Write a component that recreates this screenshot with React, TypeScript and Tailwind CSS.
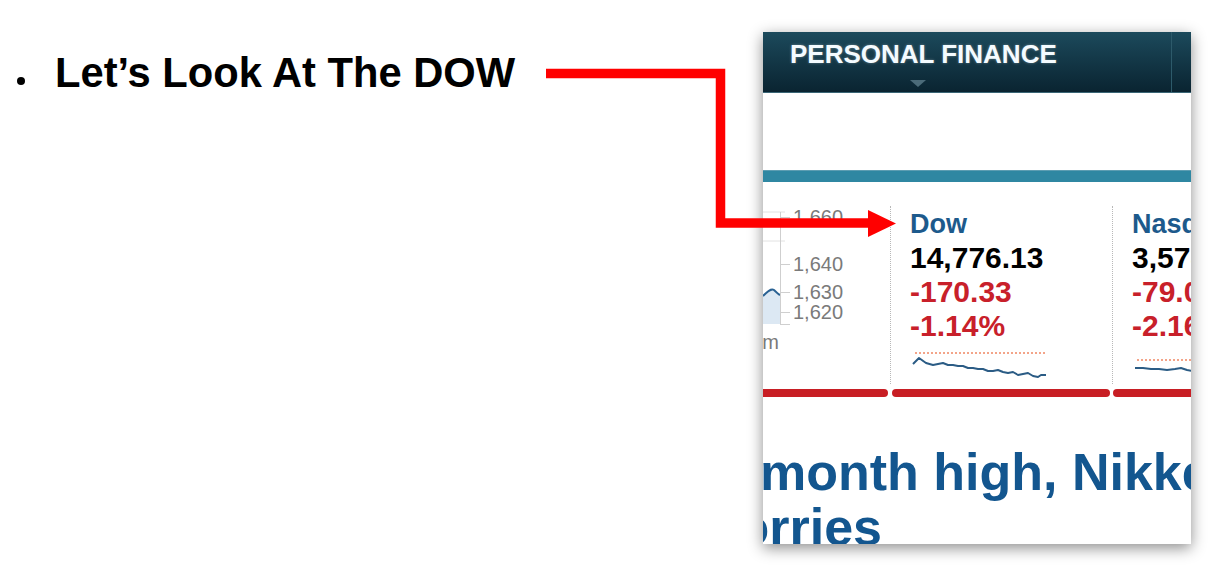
import React from "react";

const font = "font-['Liberation_Sans',Arial,sans-serif]";

// rough trace of the intraday sparkline under the Dow quote
const dowSpark = [
  [2, 8], [8, 2], [15, 7], [22, 9], [27, 8], [32, 7], [37, 9], [42, 9], [47, 10],
  [52, 10], [57, 12], [62, 12], [67, 13], [72, 13], [77, 15], [82, 15], [87, 14],
  [92, 16], [97, 17], [102, 16], [107, 19], [112, 18], [117, 17], [122, 20],
  [127, 21], [130, 19], [135, 19],
];

const nasdaqSpark = [
  [2, 5], [10, 5], [18, 6], [26, 6], [34, 7], [42, 6], [48, 5], [54, 7], [60, 8],
];

function pts(list: number[][]) {
  return list.map((p) => p.join(",")).join(" ");
}

function ChartAxis() {
  return (
    <svg width="127" height="207" viewBox="0 0 127 207">
      <line x1="0" y1="30" x2="22" y2="30" stroke="#e2e2e2" strokeWidth="1" />
      <line x1="0" y1="59" x2="22" y2="59" stroke="#e2e2e2" strokeWidth="1" />
      <path d="M0 114 C4 110 8 106 11 108 C13 110 15 112 17 113 L17 142 L0 142 Z" fill="#dce8f3" />
      <path d="M0 114 C4 110 8 106 11 108 C13 110 15 112 17 113" fill="none" stroke="#2a6293" strokeWidth="2" />
      <line x1="17.5" y1="30" x2="17.5" y2="142" stroke="#cfcfcf" strokeWidth="1" />
      <line x1="17" y1="35.5" x2="27" y2="35.5" stroke="#cfcfcf" strokeWidth="1" />
      <line x1="17" y1="82.5" x2="27" y2="82.5" stroke="#cfcfcf" strokeWidth="1" />
      <line x1="17" y1="110.5" x2="27" y2="110.5" stroke="#cfcfcf" strokeWidth="1" />
      <line x1="17" y1="130.5" x2="27" y2="130.5" stroke="#cfcfcf" strokeWidth="1" />
      <line x1="17" y1="142.5" x2="27" y2="142.5" stroke="#cfcfcf" strokeWidth="1" />
      <g fill="#7a7a7a" fontFamily="Liberation Sans, Arial, sans-serif" fontSize="20">
        <text x="30" y="42">1,660</text>
        <text x="30" y="89">1,640</text>
        <text x="30" y="117">1,630</text>
        <text x="30" y="137">1,620</text>
        <text x="16" y="167" textAnchor="end">4pm</text>
      </g>
    </svg>
  );
}

function Quote({
  name,
  last,
  change,
  pct,
  spark,
  dotsTop,
}: {
  name: string;
  last: string;
  change: string;
  pct: string;
  spark: number[][];
  dotsTop: string;
}) {
  return (
    <div className="flex flex-col whitespace-nowrap pt-[25px] pl-[19px] font-bold">
      <div className="text-[27px] leading-[34px] text-[#1d5a8c]">{name}</div>
      <div className="text-[30px] leading-[34px] text-black">{last}</div>
      <div className="text-[30px] leading-[34px] text-[#c8202a]">{change}</div>
      <div className="text-[30px] leading-[34px] text-[#c8202a]">{pct}</div>
      <div className={`${dotsTop} ml-[5px] w-[130px] border-t-2 border-dotted border-[#f3a489]`} />
      <svg className="mt-[2px] ml-[1px]" width="138" height="24" viewBox="0 0 138 24">
        <polyline points={pts(spark)} fill="none" stroke="#2b5c85" strokeWidth="2" strokeLinejoin="round" />
      </svg>
    </div>
  );
}

function Divider() {
  return <div className="mt-[24px] h-[178px] w-0 border-l border-dotted border-[#b8b8b8]" />;
}

function Screenshot() {
  return (
    <div className={`mt-[32px] flex h-[512px] w-[428px] flex-col overflow-hidden bg-white shadow-[0_4px_14px_rgba(0,0,0,0.45)] ${font}`}>
      {/* nav header */}
      <div className="flex h-[61px] shrink-0 border-b border-[#3a6676] bg-gradient-to-b from-[#1c4a5c] to-[#0a2431]">
        <div className="flex w-[408px] flex-col pl-[27px] pt-[9px]">
          <div className="text-[26px] font-bold leading-none text-[#f4fbff] [text-shadow:0_0_3px_rgba(255,255,255,0.35)]">
            PERSONAL FINANCE
          </div>
          <div className="mt-[13px] ml-[120px] h-0 w-0 border-x-[8px] border-t-[7px] border-x-transparent border-t-[#4b6b79]" />
        </div>
        <div className="w-px bg-[#2d5a6a]" />
        <div className="flex-1" />
      </div>

      <div className="h-[77px] shrink-0 bg-white" />

      <div className="h-[12px] shrink-0 border-t border-[#5d9db2] bg-[#2f87a2]" />

      {/* ticker strip */}
      <div className="flex h-[207px] shrink-0">
        <div className="w-[127px] shrink-0">
          <ChartAxis />
        </div>
        <Divider />
        <div className="w-[221px] shrink-0">
          <Quote
            name="Dow"
            last="14,776.13"
            change="-170.33"
            pct="-1.14%"
            spark={dowSpark}
            dotsTop="mt-[9px]"
          />
        </div>
        <Divider />
        <div className="flex-1 overflow-hidden">
          <Quote
            name="Nasdaq"
            last="3,578.52"
            change="-79.05"
            pct="-2.16%"
            spark={nasdaqSpark}
            dotsTop="mt-[16px]"
          />
        </div>
      </div>

      <div className="flex h-[8px] shrink-0">
        <div className="w-[125px] rounded-r-full bg-[#c81e24]" />
        <div className="ml-[4px] w-[218px] rounded-full bg-[#c81e24]" />
        <div className="ml-[3px] flex-1 rounded-l-full bg-[#c81e24]" />
      </div>

      {/* headline */}
      <div className="mt-[48px] whitespace-nowrap text-[52px] font-bold leading-[55px] text-[#13568f]">
        <div className="-ml-[3px]">month high, Nikkei</div>
        <div className="-ml-[66px]">worries</div>
      </div>
    </div>
  );
}

export default function App() {
  return (
    <div className="relative flex h-[576px] w-[1223px] overflow-hidden bg-white">
      <div className={`flex w-[763px] shrink-0 items-start pl-[17px] pt-[52px] ${font}`}>
        <span className="mt-[25px] h-2 w-2 shrink-0 rounded-full bg-black" />
        <span className="ml-[30px] text-[41.7px] font-bold leading-none text-black">
          Let’s Look At The DOW
        </span>
      </div>

      <Screenshot />

      {/* callout arrow laid over the page */}
      <svg className="pointer-events-none absolute left-0 top-0" width="1223" height="576" viewBox="0 0 1223 576">
        <path d="M546 73.5 H720.5 V223 H872" fill="none" stroke="#ff0000" strokeWidth="9.5" strokeLinejoin="miter" />
        <polygon points="868,210 896,223.5 868,237" fill="#ff0000" />
      </svg>
    </div>
  );
}
